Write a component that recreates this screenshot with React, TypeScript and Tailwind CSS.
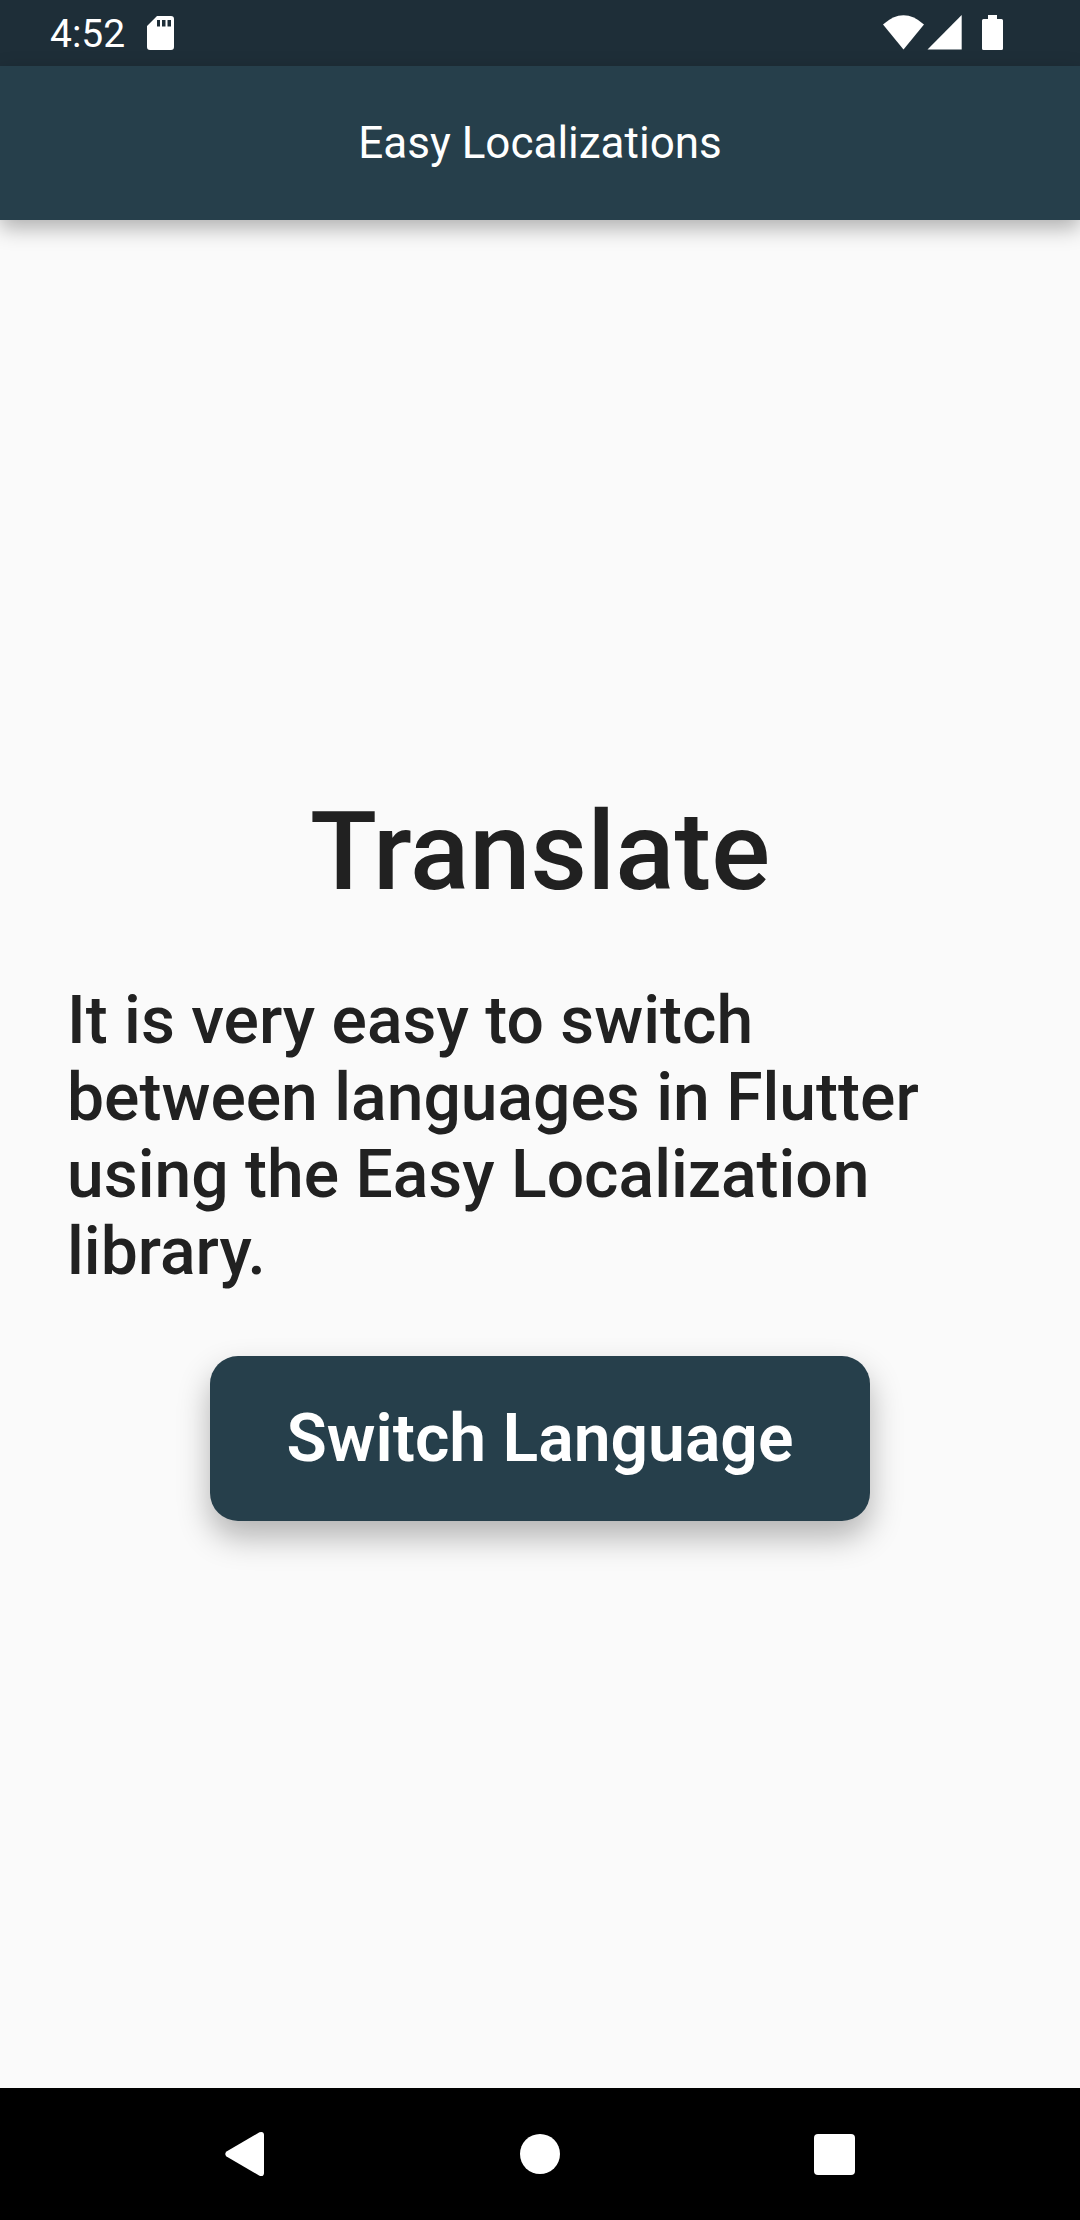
export default function App() {
  return (
    <div className="flex min-h-screen flex-col bg-[#fafafa] font-[Roboto,sans-serif] text-[#212121]">
      <div className="flex h-[66px] items-end justify-between bg-[#1e2e38] pb-4 pl-[50px] pr-[77px] text-white">
        <div className="flex items-end gap-[22px]">
          <span className="text-[39px] leading-[32px]">4:52</span>
          <svg className="h-[34px] w-[27px]" viewBox="0 0 27 34" fill="currentColor" aria-hidden="true">
            <path
              fillRule="evenodd"
              d="M10 0H24a3 3 0 0 1 3 3V31a3 3 0 0 1-3 3H3a3 3 0 0 1-3-3V10ZM10 4v6.500h3V4ZM15 4v6.500h3.500V4ZM20.500 4v6.500h3.500V4Z"
            />
          </svg>
        </div>
        <svg className="h-[35px] w-[120px]" viewBox="0 0 120 35" fill="currentColor" aria-hidden="true">
          <path d="M0 9.500Q20.500-9 41 9.500L20.500 34.500Z" />
          <path d="M44.500 34.500 78.700 0V34.500Z" />
          <path d="M105 0h9v4h4.500a1.500 1.500 0 0 1 1.500 1.500V33.500a1.500 1.500 0 0 1-1.500 1.500H100.500a1.500 1.500 0 0 1-1.500-1.500V5.500a1.500 1.500 0 0 1 1.500-1.500H105Z" />
        </svg>
      </div>
      <header className="z-10 flex h-[154px] items-center justify-center bg-[#263f4b] text-white shadow-[0_8px_20px_rgba(0,0,0,0.3)]">
        <h1 className="text-[44px] leading-[52px]">Easy Localizations</h1>
      </header>
      <main className="flex grow flex-col items-center justify-center px-[67px]">
        <h2 className="text-[110px] font-medium leading-[128px]">Translate</h2>
        <p className="mt-[66px] w-full text-[66px] font-medium leading-[77px]">
          It is very easy to switch between languages in Flutter using the Easy Localization library.
        </p>
        <button
          type="button"
          className="mt-[66px] rounded-[28px] bg-[#263f4b] px-[77px] py-[44px] text-[66px] font-semibold leading-[77px] text-white shadow-[0_16px_32px_rgba(0,0,0,0.29)]"
        >
          Switch Language
        </button>
      </main>
      <nav className="flex h-[132px] bg-black px-[98px] text-white" aria-label="System">
        <button type="button" aria-label="Back" className="flex flex-1 items-center justify-center">
          <svg className="h-[46px] w-[40px]" viewBox="0 0 40 46" fill="currentColor" aria-hidden="true">
            <path d="M1.500 20.500 34.500 1.200Q39 0 39 4V42Q39 46 34.500 44.800L1.500 25.500Q-1 23 1.500 20.500Z" />
          </svg>
        </button>
        <button type="button" aria-label="Home" className="flex flex-1 items-center justify-center">
          <span className="size-10 rounded-full bg-white" />
        </button>
        <button type="button" aria-label="Overview" className="flex flex-1 items-center justify-center">
          <span className="size-[41px] rounded bg-white" />
        </button>
      </nav>
    </div>
  );
}
